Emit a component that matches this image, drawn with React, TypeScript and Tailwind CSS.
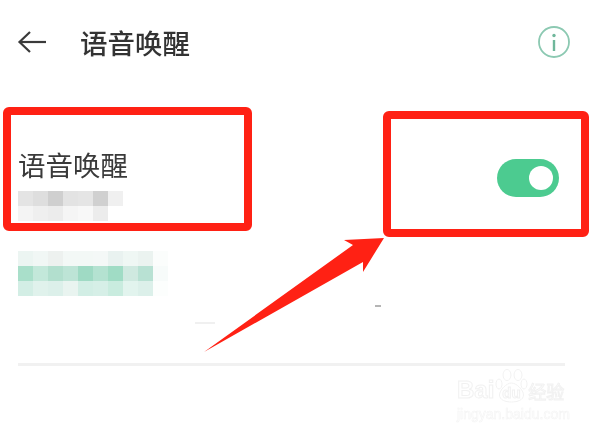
import React from 'react';

const subtitleCells = [
  ['bg-[#e4e4e4]', 'bg-[#dedede]', 'bg-[#cfcfcf]', 'bg-[#e3e3e3]', 'bg-[#e5e5e5]', 'bg-[#d0d0d0]', 'bg-[#f0f0f0]'],
  ['bg-[#f4f4f4]', 'bg-[#efefef]', 'bg-[#ececec]', 'bg-[#f5f5f5]', 'bg-[#f8f8f8]', 'bg-[#ececec]', 'bg-white'],
];

const linkCells = [
  ['bg-[#ecf5f2]', 'bg-[#f1f7f5]', 'bg-[#edf1ef]', 'bg-[#f3f8f6]', 'bg-[#f3f8f6]', 'bg-[#f4f8f7]', 'bg-[#e9f2f0]', 'bg-[#eff7f4]', 'bg-[#ebf3f0]', 'bg-[#fbfdfc]'],
  ['bg-[#a9dfca]', 'bg-[#c3e8da]', 'bg-[#b2dfce]', 'bg-[#bde4d6]', 'bg-[#9fdac4]', 'bg-[#b4e2d1]', 'bg-[#a0dcc5]', 'bg-[#cfe9e0]', 'bg-[#b8e1d3]', 'bg-[#f7fbfa]'],
  ['bg-[#d3eee5]', 'bg-[#e0f2ec]', 'bg-[#dcf0ea]', 'bg-[#e9f4f0]', 'bg-[#d2eee5]', 'bg-[#d6efe7]', 'bg-[#c9ecdf]', 'bg-[#e2f4ee]', 'bg-[#dcf0ea]', 'bg-[#fcfefd]'],
];

function Mosaic({ rows }: { rows: string[][] }) {
  return (
    <div className="flex flex-col">
      {rows.map((row, i) => (
        <div key={i} className="flex">
          {row.map((cell, j) => (
            <div key={j} className={`h-[15px] w-[15px] ${cell}`} />
          ))}
        </div>
      ))}
    </div>
  );
}

// faint stamp in the bottom right corner
function Watermark() {
  return (
    <div className="absolute left-[457px] top-[369px] flex w-[108px] flex-col font-['Liberation_Sans',sans-serif] text-white opacity-70">
      <div className="flex items-end">
        <span className="text-[24px] leading-[26px] font-bold [-webkit-text-stroke:1px_#ececec]">Bai</span>
        <div className="relative ml-[1px] h-[34px] w-[33px] shrink-0">
          <svg width="33" height="34" viewBox="0 0 33 34" fill="none" stroke="#ececec" strokeWidth="1">
            <ellipse cx="4" cy="15" rx="3" ry="5" />
            <ellipse cx="12" cy="6" rx="4" ry="5.500" />
            <ellipse cx="23" cy="6" rx="4" ry="5.500" />
            <ellipse cx="29" cy="15" rx="3" ry="5" />
            <path d="M16.500 14c5 0 12 7 12 12 0 5-6 7-12 7s-12-2-12-7c0-5 7-12 12-12z" />
          </svg>
          <span className="absolute bottom-[1px] left-[7px] text-[15px] leading-[18px] font-bold [-webkit-text-stroke:1px_#ececec]">du</span>
        </div>
        <span className="text-[18px] leading-[24px] font-['Noto_Sans_CJK_SC',sans-serif] [-webkit-text-stroke:1px_#ececec]">经验</span>
      </div>
      <span className="mt-[3px] text-[14px] leading-[16px] whitespace-nowrap [-webkit-text-stroke:0.6px_#efefef]">jingyan.baidu.com</span>
    </div>
  );
}

export default function App() {
  return (
    <div className="relative h-[433px] w-[596px] overflow-hidden bg-white font-['Noto_Sans_CJK_SC',sans-serif] text-[#333333]">
      <header className="flex h-[84px] items-center pl-[17px] pr-[26px]">
        <svg width="30" height="24" viewBox="0 0 30 24" fill="none" stroke="#3a3a3a" strokeWidth="2.2" className="shrink-0 blur-[0.3px]">
          <path d="M29 12H3" />
          <path d="M13 2 2.500 12 13 22" />
        </svg>
        <h1 className="ml-[33px] text-[27.500px] leading-[36px] font-medium blur-[0.4px]">语音唤醒</h1>
        <svg width="32" height="32" viewBox="0 0 32 32" fill="none" className="ml-auto blur-[0.3px]">
          <circle cx="16" cy="16" r="15" stroke="#8cc9b2" strokeWidth="1.800" />
          <circle cx="16" cy="9.500" r="1.700" fill="#6fb79b" />
          <path d="M16 14v11" stroke="#6fb79b" strokeWidth="2.400" />
        </svg>
      </header>

      <section className="px-[18px] pt-[61px]">
        <div className="flex items-start justify-between pr-[19px]">
          <div>
            <p className="text-[27.500px] leading-[38px] text-[#3a3a3a] blur-[0.4px]">语音唤醒</p>
            <div className="mt-[8px]">
              <Mosaic rows={subtitleCells} />
            </div>
          </div>
          <div className="mt-[14px] flex h-[38px] w-[62px] items-center justify-end rounded-full bg-[#4ccb90] pr-[6px]">
            <div className="h-[24px] w-[24px] rounded-full bg-white" />
          </div>
        </div>
        <div className="mt-[30px]">
          <Mosaic rows={linkCells} />
        </div>
        <div className="mt-[67px] mr-[13px] h-[3px] bg-[#f1f1f1]" />
      </section>

      <div className="absolute left-[195px] top-[322px] h-[2px] w-[20px] bg-[#f0f0f0]" />
      <div className="absolute left-[375px] top-[305px] h-[2px] w-[6px] bg-[#b5b5b5]" />

      <div className="absolute left-[3px] top-[107px] h-[124px] w-[249px] rounded-[6px] border-[8px] border-[#ff2114]" />
      <div className="absolute left-[383px] top-[111px] h-[126px] w-[206px] rounded-[6px] border-[8px] border-[#ff2114]" />

      <svg className="absolute left-0 top-0" width="596" height="433" viewBox="0 0 596 433">
        <polygon points="204,352 353,245 344,240 384,238 363,272 363,262" fill="#ff2114" />
      </svg>

      <Watermark />
    </div>
  );
}
